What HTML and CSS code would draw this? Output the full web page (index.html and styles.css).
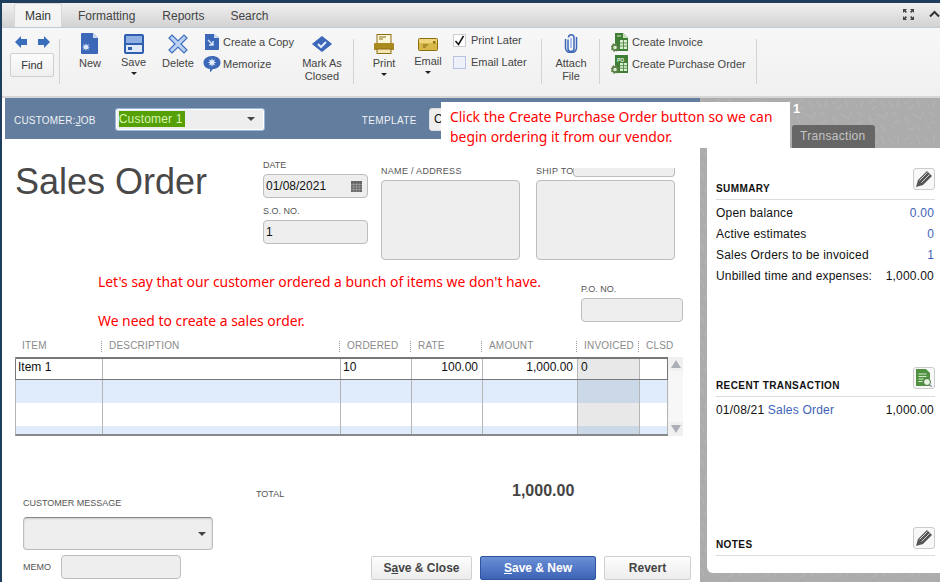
FILE: index.html
```html
<!DOCTYPE html>
<html lang="en">
<head>
<meta charset="utf-8">
<title>Sales Order</title>
<link rel="stylesheet" href="styles.css">
</head>
<body>
<div class="window">
  <nav class="tabs">
    <div class="tab active">Main</div>
    <div class="tab">Formatting</div>
    <div class="tab">Reports</div>
    <div class="tab">Search</div>
    <div class="win-tools">
      <svg width="13" height="13" viewBox="0 0 13 13"><path d="M1 1h4L3.600 2.400 5 3.800 3.800 5 2.400 3.600 1 5zM12 1v4L10.600 3.600 9.200 5 8 3.800 9.400 2.400 8 1zM1 12V8l1.400 1.400L3.800 8 5 9.200 3.600 10.600 5 12zM12 12H8l1.400-1.400L8 9.200 9.200 8l1.400 1.400L12 8z" fill="#444"/></svg>
      <svg width="11" height="8" viewBox="0 0 11 8"><path d="M1 6.500 5.500 2 10 6.500" fill="none" stroke="#333" stroke-width="2"/></svg>
    </div>
  </nav>
  <div class="toolbar">
    <div class="nav-group">
      <div class="arrows">
        <svg width="13" height="12" viewBox="0 0 13 12"><path d="M0 6 6 0v3h6v6H6v3z" fill="#3a6ebd"/></svg>
        <svg width="13" height="12" viewBox="0 0 13 12"><path d="M13 6 7 0v3H1v6h6v3z" fill="#3a6ebd"/></svg>
      </div>
      <div class="find">Find</div>
    </div>
    <div class="tb-sep"></div>
    <div class="tb-btn new">
      <svg width="18" height="21" viewBox="0 0 18 21"><path d="M1 0h11l5 5v15a1 1 0 0 1-1 1H1a1 1 0 0 1-1-1V1a1 1 0 0 1 1-1z" fill="#3d68b8"/><path d="M12 0l5 5h-5z" fill="#cfdcf2"/><path d="M5 10l.8 2.400L8 11l-1 2.400 2.300.6-2.300.8 1 2.200-2.200-1.300L5 18l-.8-2.300L2 17l1-2.200L.8 14l2.200-.6L2 11l2.200 1.400z" fill="#dce8fa"/></svg>
      <span>New</span>
    </div>
    <div class="tb-btn save">
      <svg width="20" height="20" viewBox="0 0 20 20"><rect width="20" height="20" rx="2" fill="#2f5fae"/><rect x="2" y="2" width="16" height="7" fill="#8fb0e2"/><rect x="2" y="11" width="16" height="7" fill="#dfe9f8"/><rect x="4" y="13" width="4" height="3" fill="#2f5fae"/></svg>
      <span>Save</span><i class="caret"></i>
    </div>
    <div class="tb-btn delete">
      <svg width="20" height="20" viewBox="0 0 20 20"><path d="M4 1l6 6 6-6 3 3-6 6 6 6-3 3-6-6-6 6-3-3 6-6-6-6z" fill="#bcd2f2" stroke="#3f6fbd" stroke-width="1.200"/></svg>
      <span>Delete</span>
    </div>
    <div class="tb-pair copy-pair">
      <div class="tb-line">
        <svg width="16" height="18" viewBox="0 0 16 18"><path d="M1 1h9l5 4v11a1 1 0 0 1-1 1H1z" fill="#3d68b8"/><path d="M10 1l5 4h-5z" fill="#cfdcf2"/><path d="M4 7l5 5M9 8v4H5" fill="none" stroke="#dce8fa" stroke-width="1.400"/></svg>
        <span>Create a Copy</span>
      </div>
      <div class="tb-line memorize">
        <svg width="18" height="18" viewBox="0 0 18 18"><path d="M9 1c5 0 8.500 2.500 8.500 6.500S14 14 10 14l-3 3.500V14C3 13.500.5 11 .5 7.500S4 1 9 1z" fill="#3d68b8"/><path d="M9 3l.8 2.500L12 4.500l-1 2.300 2.400.7-2.400.8 1 2.200-2.200-1.100L9 12l-.8-2.600L6 10.500l1-2.200-2.400-.8L7 6.800 6 4.500l2.200 1z" fill="#e3edfb"/></svg>
        <span>Memorize</span>
      </div>
    </div>
    <div class="tb-btn closed">
      <svg width="20" height="16" viewBox="0 0 20 16"><path d="M10 .5l9.500 7.500-9.500 7.500L.5 8z" fill="#3d68b8" stroke="#3d68b8" stroke-linejoin="round"/><path d="M6 8l3 3 5-5" fill="none" stroke="#e3edfb" stroke-width="2"/></svg>
      <span>Mark As<br>Closed</span>
    </div>
    <div class="tb-sep"></div>
    <div class="tb-btn print">
      <svg width="20" height="20" viewBox="0 0 20 20"><rect x="3" y=".5" width="14" height="10" fill="#fbf6dc" stroke="#8d6f10"/><path d="M5 3h7M5 5h4" stroke="#8d6f10"/><path d="M1 9h18a1 1 0 0 1 1 1v6H0v-6a1 1 0 0 1 1-1z" fill="#a98a1f"/><rect x="3" y="15" width="14" height="4.500" fill="#f1e6b3" stroke="#8d6f10"/></svg>
      <span>Print</span><i class="caret"></i>
    </div>
    <div class="tb-btn email">
      <svg width="20" height="14" viewBox="0 0 20 14"><rect x=".5" y=".5" width="19" height="12" rx="1" fill="#d9b84a" stroke="#8d6f10"/><rect x="1" y="1" width="18" height="4" fill="#efd67d"/><path d="M5 7h5M5 9h3" stroke="#7d6210"/><rect x="15" y="3" width="2.500" height="2.500" fill="#8d6f10"/></svg>
      <span>Email</span><i class="caret"></i>
    </div>
    <div class="tb-checks">
      <label class="check-line"><span class="check on"><svg width="11" height="11" viewBox="0 0 11 11"><path d="M1.500 6l3 3.500L9.500 1" fill="none" stroke="#111" stroke-width="1.500"/></svg></span>Print Later</label>
      <label class="check-line"><span class="check"></span>Email Later</label>
    </div>
    <div class="tb-sep"></div>
    <div class="tb-btn attach">
      <svg width="14" height="20" viewBox="0 0 14 20"><path d="M4 6v9a3 3 0 0 0 6 0V4a2.700 2.700 0 0 0-5.500 0" transform="translate(0 .5)" fill="none" stroke="#3d68b8" stroke-width="1.500"/><path d="M1.500 6v9a5.500 4.800 0 0 0 11 0V4" fill="none" stroke="#3d68b8" stroke-width="1.500"/><path d="M7 5v10" stroke="#8fb0e2" stroke-width="1.500"/></svg>
      <span>Attach<br>File</span>
    </div>
    <div class="tb-sep"></div>
    <div class="tb-pair create">
      <div class="tb-line">
        <svg width="18" height="19" viewBox="0 0 18 19"><path d="M4 0h8l5 5v13H4z" fill="#3f7f35"/><path d="M12 0l5 5h-5z" fill="#c9e4bd"/><path d="M6 3h4" stroke="#cfe6c6"/><path d="M9 7h7v9H9z" fill="#dbeed3"/><path d="M9 10h7M9 13h7M12.500 7v9" stroke="#3f7f35" stroke-width=".8"/><circle cx="4" cy="14.500" r="2.600" fill="#dbeed3" stroke="#5d7f47" stroke-width="1.600"/><circle cx="4" cy="14.500" r="3.600" fill="none" stroke="#5d7f47" stroke-width="1.400" stroke-dasharray="1.500 1.300"/></svg>
        <span>Create Invoice</span>
      </div>
      <div class="tb-line">
        <svg width="18" height="19" viewBox="0 0 18 19"><path d="M4 0h13v18H4z" fill="#3f7f35"/><text x="6" y="6.500" class="po-mark">PO</text><path d="M9 8h7v8H9z" fill="#dbeed3"/><path d="M9 10.600h7M9 13.200h7M12.500 8v8" stroke="#3f7f35" stroke-width=".8"/><circle cx="4" cy="14.500" r="2.600" fill="#dbeed3" stroke="#5d7f47" stroke-width="1.600"/><circle cx="4" cy="14.500" r="3.600" fill="none" stroke="#5d7f47" stroke-width="1.400" stroke-dasharray="1.500 1.300"/></svg>
        <span>Create Purchase Order</span>
      </div>
    </div>
    <div class="tb-sep"></div>
  </div>

  <div class="content">
    <main class="form">
      <header class="band">
        <span class="band-label">CUSTOMER:<u>J</u>OB</span>
        <div class="customer-select"><span class="selected">Customer 1</span><i class="drop"></i></div>
        <span class="band-label template">TEMPLATE</span>
        <div class="template-select">C</div>
      </header>

      <section class="top">
        <h1>Sales Order</h1>
        <div class="date-col">
          <label>DATE</label>
          <div class="field date">01/08/2021
            <svg width="11" height="11" viewBox="0 0 11 11"><rect width="11" height="11" fill="#666"/><path d="M0 3.500h11M0 6h11M0 8.500h11M2.700 2v9M5.500 2v9M8.200 2v9" stroke="#aaa" stroke-width=".6"/></svg>
          </div>
          <label class="so-label">S.O. NO.</label>
          <div class="field">1</div>
        </div>
        <div class="addr name">
          <label>NAME / ADDRESS</label>
          <div class="field box"></div>
        </div>
        <div class="addr ship">
          <label>SHIP TO</label>
          <div class="field ship-select"></div>
          <div class="field box"></div>
        </div>
      </section>

      <section class="po">
        <label>P.O. NO.</label>
        <div class="field"></div>
      </section>

      <section class="grid-wrap">
        <div class="grid-head">
          <span>ITEM</span><span>DESCRIPTION</span><span>ORDERED</span><span>RATE</span><span>AMOUNT</span><span>INVOICED</span><span>CLSD</span>
        </div>
        <div class="grid-body">
          <div class="rows">
            <div class="row first"><span>Item 1</span><span></span><span>10</span><span class="num">100.00</span><span class="num">1,000.00</span><span class="inv">0</span><span></span></div>
            <div class="row blue r2"><span></span><span></span><span></span><span></span><span></span><span class="inv"></span><span></span></div>
            <div class="row r3"><span></span><span></span><span></span><span></span><span></span><span class="inv"></span><span></span></div>
            <div class="row blue r4"><span></span><span></span><span></span><span></span><span></span><span class="inv"></span><span></span></div>
          </div>
          <div class="scroll">
            <svg width="12" height="12" viewBox="0 0 12 12"><path d="M6 2l5 8H1z" fill="#aab0b5"/></svg>
            <div class="track"></div>
            <svg width="12" height="12" viewBox="0 0 12 12"><path d="M6 10l5-8H1z" fill="#aab0b5"/></svg>
          </div>
        </div>
      </section>

      <section class="bottom">
        <div class="msg-col">
          <label>CUSTOMER MESSAGE</label>
          <div class="field message"><i class="drop"></i></div>
          <div class="memo-line">
            <label>MEMO</label>
            <div class="field memo"></div>
          </div>
        </div>
        <div class="total-col">
          <div class="total-line"><label>TOTAL</label><strong>1,000.00</strong></div>
          <div class="actions">
            <button class="btn close">S<u>a</u>ve &amp; Close</button>
            <button class="btn primary"><u>S</u>ave &amp; New</button>
            <button class="btn revert">Revert</button>
          </div>
        </div>
      </section>
    </main>

    <aside class="side">
      <div class="side-head">
        <div class="side-num">1</div>
        <div class="side-tab">Transaction</div>
      </div>
      <div class="panel">
        <section class="summary">
          <div class="p-title">
            <h2>SUMMARY</h2>
            <span class="icon-btn"><svg width="18" height="18" viewBox="0 0 18 18"><path d="M1 17l2-7 9-9 5 5-9 9z" fill="#555"/><path d="M4.500 10.500l8-8M6.500 12.500l8-8" stroke="#e8e8e8" stroke-width=".9"/></svg></span>
          </div>
          <div class="p-row"><span>Open balance</span><a>0.00</a></div>
          <div class="p-row"><span>Active estimates</span><a>0</a></div>
          <div class="p-row"><span>Sales Orders to be invoiced</span><a>1</a></div>
          <div class="p-row"><span>Unbilled time and expenses:</span><span>1,000.00</span></div>
        </section>
        <section class="recent">
          <div class="p-title">
            <h2>RECENT TRANSACTION</h2>
            <span class="icon-btn"><svg width="16" height="18" viewBox="0 0 16 18"><path d="M0 0h10l4 4v13H0z" fill="#4f9140"/><path d="M2.500 5h8M2.500 7.500h8M2.500 10h5M2.500 12.500h4" stroke="#d8edcf"/><circle cx="11" cy="13" r="3.500" fill="#e9f3e4" stroke="#47763b"/><path d="M13.500 15.500L16 18" stroke="#8a9aa5" stroke-width="1.500"/></svg></span>
          </div>
          <div class="p-row"><span>01/08/21 <a>Sales Order</a></span><span>1,000.00</span></div>
        </section>
        <section class="notes">
          <div class="p-title">
            <h2>NOTES</h2>
            <span class="icon-btn"><svg width="18" height="18" viewBox="0 0 18 18"><path d="M1 17l2-7 9-9 5 5-9 9z" fill="#555"/><path d="M4.500 10.500l8-8M6.500 12.500l8-8" stroke="#e8e8e8" stroke-width=".9"/></svg></span>
          </div>
        </section>
      </div>
    </aside>
  </div>

  <div class="note callout">Click the Create Purchase Order button so we can<br>begin ordering it from our vendor.</div>
  <div class="note note-a">Let's say that our customer ordered a bunch of items we don't have.</div>
  <div class="note note-b">We need to create a sales order.</div>
</div>
</body>
</html>
```
FILE: styles.css
```css
* { box-sizing: border-box; }
html, body { margin: 0; padding: 0; }
body { width: 940px; height: 582px; overflow: hidden; background: #1f3d5c; font-family: "Liberation Sans", Arial, sans-serif; color: #111; }
label { display: block; font-size: 9px; color: #555; }
u { text-underline-offset: 1px; }

.window { position: relative; width: 938px; height: 579px; margin: 3px 0 0 2px; display: flex; flex-direction: column; background: #f2f2f2; }

.tabs { height: 25px; flex: none; display: flex; align-items: flex-end; padding-left: 12px; background: linear-gradient(#f0f0f0, #d2d2d2); border-bottom: 1px solid #c3ccd6; font-size: 12px; color: #444; }
.tab { height: 24px; line-height: 26px; padding: 0 10px; margin-right: 6px; }
.tab:nth-child(2) { padding-left: 11px; }
.tab:nth-child(3) { padding: 0 6px 0 11px; margin-right: 10px; }
.tab.active { width: 48px; padding: 0 0 0 10px; margin-right: 5px; background: linear-gradient(#f5f5f5, #f2f2f2); border: 1px solid #d8d8d8; border-bottom: 0; border-radius: 3px 3px 0 0; line-height: 25px; color: #333; }
.win-tools { margin-left: auto; height: 24px; display: flex; align-items: center; gap: 14px; padding-bottom: 2px; }

.toolbar { height: 70px; flex: none; display: flex; align-items: flex-start; background: linear-gradient(#f7f7f7, #f0f0f0); border-bottom: 2px solid #d6d6d6; font-size: 11px; color: #444; }
.nav-group { flex: none; width: 57px; padding: 8px 0 0 8px; }
.arrows { display: flex; gap: 9px; padding-left: 5px; }
.find { width: 44px; height: 24px; margin-top: 5px; line-height: 22px; text-align: center; border: 1px solid #cfcfcf; border-radius: 2px; background: linear-gradient(#fcfcfc, #efefef); color: #333; font-size: 11px; }
.tb-btn { flex: none; display: flex; flex-direction: column; align-items: center; line-height: 13px; text-align: center; }
.tb-btn svg, .tb-btn span { display: block; }
.caret { display: block; width: 0; height: 0; margin-top: 3px; border: 3px solid transparent; border-top-color: #222; border-bottom: 0; }
.tb-sep { flex: none; width: 1px; height: 45px; margin-top: 11px; background: #d3d3d3; }
.new { width: 32px; margin-left: 14px; padding-top: 5px; }
.new span { margin-top: 3px; }
.save { width: 37px; margin-left: 9px; padding-top: 6px; }
.save span { margin-top: 2px; }
.delete { width: 36px; margin-left: 8px; padding-top: 6px; }
.delete span { margin-top: 3px; }
.tb-pair { flex: none; display: flex; flex-direction: column; gap: 4px; padding-top: 5px; }
.tb-line { display: flex; align-items: center; gap: 3px; height: 18px; white-space: nowrap; }
.copy-pair { width: 92px; margin-left: 8px; }
.memorize { gap: 2px; margin-left: -1px; }
.closed { width: 40px; margin: 0 11px 0 6px; padding-top: 8px; }
.closed span { margin-top: 5px; }
.print { width: 30px; margin-left: 15px; padding-top: 6px; }
.print span { margin-top: 3px; }
.email { width: 30px; margin-left: 14px; padding-top: 10px; }
.email span { margin-top: 3px; }
.tb-checks { flex: none; width: 88px; margin-left: 10px; padding-top: 6px; display: flex; flex-direction: column; gap: 9px; }
.check-line { display: flex; align-items: flex-start; gap: 5px; height: 13px; font-size: 11px; line-height: 12px; color: #444; }
.check { flex: none; width: 13px; height: 13px; border: 1px solid #b8c4e0; background: #eef1fa; display: flex; align-items: center; justify-content: center; }
.check.on { border-color: #ccc; background: #fff; }
.attach { width: 40px; margin: 0 8px 0 9px; padding-top: 5px; }
.attach span { margin-top: 4px; }
.create { margin: 0 10px 0 11px; }
.po-mark { font: 700 5px "Liberation Sans", sans-serif; fill: #e8f4e2; }

.content { flex: 1; min-height: 0; display: flex; position: relative; background: #acacac url("data:image/svg+xml,%3Csvg xmlns='http://www.w3.org/2000/svg' width='36' height='36'%3E%3Cg stroke='%23b5b5b5' stroke-width='1' fill='none'%3E%3Cpath d='M2 6l7-4M6 11l6-3M15 2l3 8M22 4l6 5M33 1l-2 8M3 18l3 8M10 16l7 3M22 14l-4 8M27 14l6 4M33 23l-6 3M4 32l8-2M15 27l4 7M24 26l5 6'/%3E%3C/g%3E%3C/svg%3E"); }

.form { width: 698px; padding-left: 3px; flex: none; background: #fff; display: flex; flex-direction: column; }
.band { height: 41px; flex: none; background: #637d9e; display: flex; align-items: center; color: #eef2f6; font-size: 10px; padding-left: 9px; }
.band-label { letter-spacing: .2px; padding-top: 4px; }
.customer-select { width: 150px; height: 23px; margin: 1px 0 0 19px; border: 1px solid #9cb6d8; border-radius: 3px; background: #eee; box-shadow: 0 0 0 1px #fff inset; display: flex; align-items: center; padding: 0 3px; justify-content: space-between; font-size: 12px; }
.selected { background: #55a007; color: #d8f5b0; line-height: 16px; width: 66px; letter-spacing: .2px; }
.drop { display: block; width: 0; height: 0; border: 4px solid transparent; border-top: 4px solid #444; border-bottom: 0; margin-right: 6px; }
.template { margin-left: 97px; letter-spacing: .4px; }
.template-select { width: 40px; height: 23px; margin: 1px 0 0 12px; background: #eee; border: 1px solid #ddd; border-radius: 3px; color: #111; font-size: 12px; line-height: 21px; padding-left: 4px; }

.top { display: flex; align-items: flex-start; height: 123px; flex: none; }
h1 { margin: 21px 0 0 10px; width: 248px; font-size: 36px; font-weight: 400; line-height: 44px; color: #484848; }
.field { background: #eee; border: 1px solid #bdbdbd; border-radius: 4px; }
.date-col { width: 105px; padding-top: 21px; }
.date-col .field { height: 24px; line-height: 22px; padding-left: 2px; font-size: 12px; color: #111; }
.date { display: flex; justify-content: space-between; align-items: center; padding-right: 5px; }
.date-col label { line-height: 11px; margin-bottom: 3px; }
.so-label { margin-top: 8px; }
.addr { position: relative; width: 139px; padding-top: 41px; }
.addr label { position: absolute; top: 28px; line-height: 9px; letter-spacing: .3px; }
.box { height: 80px; }
.name { margin-left: 13px; }
.ship { margin-left: 16px; }
.ship-select { position: absolute; left: 37px; top: 29px; height: 9px; width: 102px; border-top: 0; border-radius: 0 0 4px 4px; }

.po { height: 79px; flex: none; margin: -1px 0 0 576px; width: 102px; padding-top: 23px; }
.po label { line-height: 11px; margin-bottom: 3px; }
.po .field { height: 24px; }

.grid-wrap { flex: none; margin-left: 10px; width: 668px; font-size: 12px; }
.grid-head { height: 17px; display: grid; grid-template-columns: 87px 238px 71px 71px 95px 62px 29px; font-size: 10px; color: #8a8a8a; line-height: 12px; letter-spacing: .2px; white-space: nowrap; }
.grid-head span { padding-left: 7px; position: relative; }
.grid-head span:not(:first-child)::before { content: ""; position: absolute; left: -1px; top: 1px; height: 11px; border-left: 1px dotted #999; }
.grid-body { display: flex; }
.rows { width: 653px; height: 79px; border-top: 2px solid #777; border-left: 1px solid #b5b5b5; border-bottom: 2px solid #888; }
.row { display: grid; grid-template-columns: 87px 238px 71px 71px 95px 62px 28px; }
.row span { border-right: 1px solid #b5b5b5; padding: 0 2px; overflow: hidden; line-height: 17px; }
.row .num { text-align: right; padding-right: 4px; }
.row .inv { background: #e8e8e8; padding-left: 3px; }
.row.first { height: 21px; border-bottom: 1px solid #777; box-shadow: -1px 0 0 #777; }
.row.first span:last-child { border-right-color: #777; }
.row.blue { background: #e0ebfb; }
.row.blue .inv { background: #cbd8e7; }
.r2, .r3 { height: 23px; }
.r4 { height: 8px; }
.scroll { width: 15px; height: 79px; background: #f0f0f0; display: flex; flex-direction: column; align-items: center; }
.scroll svg { flex: none; margin: 1px 0; }
.track { flex: 1; width: 14px; background: #f7f7f7; }

.bottom { flex: 1; display: flex; min-height: 0; }
.msg-col { width: 241px; padding: 62px 0 0 18px; }
.msg-col > label { line-height: 11px; }
.message { width: 190px; height: 33px; margin-top: 8px; border-top: 1px solid #888; display: flex; align-items: center; justify-content: flex-end; box-shadow: inset 0 1px 2px #ccc; }
.memo-line { display: flex; align-items: center; margin-top: 5px; }
.memo-line label { width: 38px; }
.memo { width: 120px; height: 24px; }
.total-col { flex: 1; display: flex; flex-direction: column; padding-top: 46px; }
.total-line { height: 20px; display: flex; }
.total-line label { width: 266px; padding-left: 10px; margin-top: 7px; line-height: 11px; }
.total-line strong { font-size: 16px; line-height: 20px; color: #444; margin-top: -1px; }
.actions { display: flex; gap: 8px; margin: 54px 0 0 125px; }
.btn { height: 24px; padding: 0; font: 700 12px "Liberation Sans", sans-serif; color: #444; border: 1px solid #d0d0d0; border-radius: 2px; background: linear-gradient(#fdfdfd, #ececec); }
.close { width: 101px; }
.primary { width: 116px; color: #fff; border-color: #2f559e; background: linear-gradient(#6a8fd6, #3d63b6); }
.revert { width: 87px; }

.side { flex: 1; min-width: 0; display: flex; flex-direction: column; }
.side-head { height: 50px; flex: none; position: relative; color: #fff; }
.side-num { position: absolute; left: 93px; top: 3px; font-size: 13px; font-weight: 700; }
.side-tab { position: absolute; left: 92px; bottom: 0; width: 83px; height: 23px; padding-left: 8px; background: #666; border-radius: 3px 3px 0 0; color: #c5c5c5; font-size: 12px; line-height: 22px; letter-spacing: .3px; }
.panel { margin: 0 0 9px 7px; flex: 1; background: #fff; border-radius: 0 0 0 6px; padding: 23px 6px 0 9px; display: flex; flex-direction: column; font-size: 12px; letter-spacing: .2px; }
.p-title { display: flex; align-items: flex-end; border-bottom: 1px solid #ddd; height: 29px; margin-right: -1px; position: relative; }
h2 { margin: 0 0 4px; font-size: 10px; line-height: 12px; letter-spacing: .4px; font-weight: 700; color: #111; }
.icon-btn { position: absolute; right: 0; top: -3px; width: 22px; height: 22px; border: 1px solid #ccc; border-radius: 3px; background: #f8f8f8; display: flex; align-items: center; justify-content: center; }
.recent .icon-btn { top: -1px; }
.notes .icon-btn { top: 0; }
.p-row { display: flex; justify-content: space-between; height: 21px; line-height: 21px; }
.p-row:nth-child(2) { margin-top: 3px; }
.p-row a { color: #3e62b8; }
.summary { height: 197px; flex: none; }
.recent { height: 159px; flex: none; }
.notes { flex: 1; }

.note { position: absolute; color: #f00; font-family: "Noto Sans", "Open Sans", sans-serif; font-size: 13.9px; line-height: 20px; white-space: nowrap; }
.callout { left: 439px; top: 99px; width: 349px; height: 46px; padding: 5px 0 0 9px; background: #fff; }
.note-a { left: 96px; top: 269px; }
.note-b { left: 96px; top: 308px; }
```
